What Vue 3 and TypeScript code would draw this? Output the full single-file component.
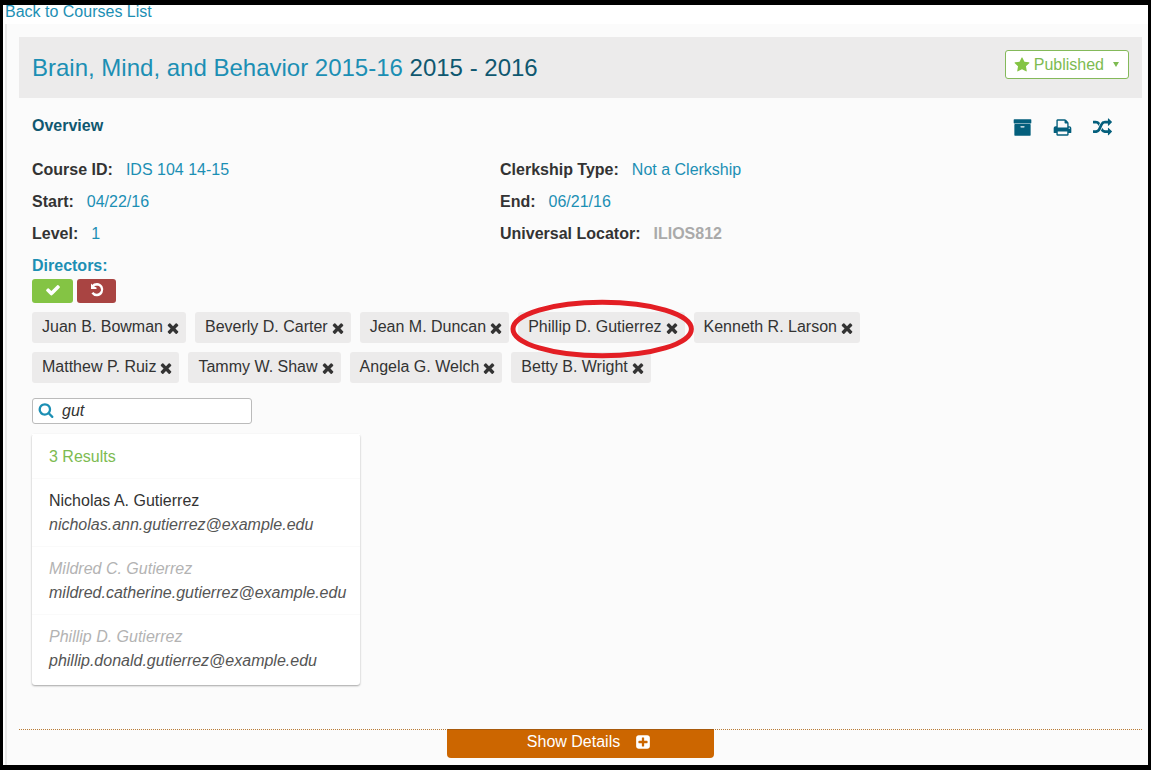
<script setup lang="ts">
import { ref } from 'vue'

interface Result {
  name: string
  email: string
  disabled: boolean
}

interface Director {
  name: string
  highlighted?: boolean
}

const icons = {
  archive: 'M1088 832q0-26-19-45t-45-19h-256q-26 0-45 19t-19 45 19 45 45 19h256q26 0 45-19t19-45zm576-192v960q0 26-19 45t-45 19h-1408q-26 0-45-19t-19-45v-960q0-26 19-45t45-19h1408q26 0 45 19t19 45zm64-448v256q0 26-19 45t-45 19h-1536q-26 0-45-19t-19-45v-256q0-26 19-45t45-19h1536q26 0 45 19t19 45z',
  print: 'M448 1536h896v-256h-896v256zm0-640h896v-384h-160q-40 0-68-28t-28-68v-160h-640v640zm1152 64q0-26-19-45t-45-19-45 19-19 45 19 45 45 19 45-19 19-45zm128 0v416q0 13-9.5 22.5t-22.5 9.5h-224v160q0 40-28 68t-68 28h-960q-40 0-68-28t-28-68v-160h-224q-13 0-22.5-9.5t-9.5-22.5v-416q0-79 56.5-135.5t135.5-56.5h64v-544q0-40 28-68t68-28h672q40 0 88 20t76 48l152 152q28 28 48 76t20 88v256h64q79 0 135.5 56.5t56.5 135.5z',
  random: 'M666 481q-60 92-137 273-22-45-37-72.5t-40.5-63.5-51-56.5-63-35-81.5-14.5h-224q-14 0-23-9t-9-23v-192q0-14 9-23t23-9h224q250 0 410 225zm1126 799q0 14-9 23l-320 320q-9 9-23 9-13 0-22.5-9.5t-9.5-22.5v-192q-32 0-85 .5t-81 1-73-1-71-5-64-10.5-63-18.5-58-28.5-59-40-55-53.5-56-69.5q59-93 136-273 22 45 37 72.5t40.5 63.5 51 56.5 63 35 81.5 14.5h256v-192q0-14 9-23t23-9q12 0 24 10l319 319q9 9 9 23zm0-896q0 14-9 23l-320 320q-9 9-23 9-13 0-22.5-9.5t-9.5-22.5v-192h-256q-48 0-87 15t-69 45-51 61.5-45 77.5q-32 62-78 171-29 66-49.5 111t-54 105-64 100-74 83-90 68.5-106.5 42-128 16.5h-224q-14 0-23-9t-9-23v-192q0-14 9-23t23-9h224q48 0 87-15t69-45 51-61.5 45-77.5q32-62 78-171 29-66 49.5-111t54-105 64-100 74-83 90-68.5 106.5-42 128-16.5h256v-192q0-14 9-23t23-9q12 0 24 10l319 319q9 9 9 23z',
  star: 'M1728 647q0 22-26 48l-363 354 86 500q1 7 1 20 0 21-10.5 35.5t-30.5 14.5q-19 0-40-12l-449-236-449 236q-22 12-40 12-21 0-31.5-14.5t-10.5-35.5q0-6 2-20l86-500-364-354q-25-27-25-48 0-37 56-46l502-73 225-455q19-41 49-41t49 41l225 455 502 73q56 9 56 46z',
  check: 'M1671 566q0 40-28 68l-724 724-136 136q-28 28-68 28t-68-28l-136-136-362-362q-28-28-28-68t28-68l136-136q28-28 68-28t68 28l294 295 656-657q28-28 68-28t68 28l136 136q28 28 28 68z',
  times: 'M1490 1322q0 40-28 68l-136 136q-28 28-68 28t-68-28l-294-294-294 294q-28 28-68 28t-68-28l-136-136q-28-28-28-68t28-68l294-294-294-294q-28-28-28-68t28-68l136-136q28-28 68-28t68 28l294 294 294-294q28-28 68-28t68 28l136 136q28 28 28 68t-28 68l-294 294 294 294q28 28 28 68z',
  search: 'M1216 832q0-185-131.5-316.5t-316.5-131.5-316.5 131.5-131.5 316.5 131.5 316.5 316.5 131.5 316.5-131.5 131.5-316.5zm512 832q0 52-38 90t-90 38q-54 0-90-38l-343-342q-179 124-399 124-143 0-273.5-55.5t-225-150-150-225-55.5-273.5 55.5-273.5 150-225 225-150 273.5-55.5 273.5 55.5 225 150 150 225 55.5 273.5q0 220-124 399l343 343q37 37 37 90z',
  plus: 'M1408 960v-128q0-26-19-45t-45-19h-320v-320q0-26-19-45t-45-19h-128q-26 0-45 19t-19 45v320h-320q-26 0-45 19t-19 45v128q0 26 19 45t45 19h320v320q0 26 19 45t45 19h128q26 0 45-19t19-45v-320h320q26 0 45-19t19-45zm256-544v960q0 119-84.5 203.5t-203.5 84.5h-960q-119 0-203.5-84.5t-84.5-203.5v-960q0-119 84.5-203.5t203.5-84.5h960q119 0 203.5 84.5t84.5 203.5z'
}

const query = ref<string>('gut')

const directors = ref<Director[]>([
  { name: 'Juan B. Bowman' },
  { name: 'Beverly D. Carter' },
  { name: 'Jean M. Duncan' },
  { name: 'Phillip D. Gutierrez', highlighted: true },
  { name: 'Kenneth R. Larson' },
  { name: 'Matthew P. Ruiz' },
  { name: 'Tammy W. Shaw' },
  { name: 'Angela G. Welch' },
  { name: 'Betty B. Wright' }
])

const results: Result[] = [
  { name: 'Nicholas A. Gutierrez', email: 'nicholas.ann.gutierrez@example.edu', disabled: false },
  { name: 'Mildred C. Gutierrez', email: 'mildred.catherine.gutierrez@example.edu', disabled: true },
  { name: 'Phillip D. Gutierrez', email: 'phillip.donald.gutierrez@example.edu', disabled: true }
]

function remove(name: string): void {
  directors.value = directors.value.filter((d) => d.name !== name)
}
</script>

<template>
  <div class="frame">
    <nav class="back"><a href="#">Back to Courses List</a></nav>
    <main class="course">
      <header class="course-header">
        <h1><a href="#">Brain, Mind, and Behavior 2015-16</a> 2015 - 2016</h1>
        <button type="button" class="published">
          <svg class="icon" viewBox="0 0 1792 1792"><path :d="icons.star" /></svg>
          <span>Published</span>
          <span class="caret"></span>
        </button>
      </header>

      <section class="overview">
        <div class="overview-title">
          <h2>Overview</h2>
          <div class="tools">
            <button type="button" aria-label="Materials"><svg viewBox="0 0 1792 1792"><path :d="icons.archive" /></svg></button>
            <button type="button" aria-label="Print"><svg viewBox="0 0 1792 1792"><path :d="icons.print" /></svg></button>
            <button type="button" aria-label="Rollover"><svg viewBox="0 0 1792 1792"><path :d="icons.random" /></svg></button>
          </div>
        </div>

        <dl class="facts">
          <div><dt>Course ID:</dt><dd><a href="#">IDS 104 14-15</a></dd></div>
          <div><dt>Clerkship Type:</dt><dd><a href="#">Not a Clerkship</a></dd></div>
          <div><dt>Start:</dt><dd><a href="#">04/22/16</a></dd></div>
          <div><dt>End:</dt><dd><a href="#">06/21/16</a></dd></div>
          <div><dt>Level:</dt><dd><a href="#">1</a></dd></div>
          <div><dt>Universal Locator:</dt><dd class="locator">ILIOS812</dd></div>
        </dl>

        <h3>Directors:</h3>
        <div class="actions">
          <button type="button" class="save" aria-label="Save"><svg class="icon" viewBox="0 0 1792 1792"><path :d="icons.check" /></svg></button>
          <button type="button" class="cancel" aria-label="Cancel">
            <svg class="icon undo" viewBox="0 0 16 16">
              <path class="head" d="M2 1.5L3.7 3.2L4.6 2.4L5.2 4.6L7.5 5.4V7H2z" />
              <path class="arc" d="M3.5 4.2C4.6 2.9 6.2 2.2 8 2.2a5.4 5.4 0 1 1-4.6 8.6" />
            </svg>
          </button>
        </div>

        <ul class="chips">
          <li v-for="d in directors" :key="d.name">
            <button type="button" @click="remove(d.name)">
              {{ d.name }}<svg class="icon" viewBox="0 0 1792 1792"><path :d="icons.times" /></svg>
            </button>
            <svg v-if="d.highlighted" class="ring" viewBox="0 0 186 60"><ellipse cx="93" cy="30" rx="90" ry="27" /></svg>
          </li>
        </ul>

        <label class="search">
          <svg class="icon" viewBox="0 0 1792 1792"><path :d="icons.search" /></svg>
          <input v-model="query" type="text" aria-label="Search directors" />
        </label>

        <ul class="results">
          <li class="count">{{ results.length }} Results</li>
          <li v-for="r in results" :key="r.email" :class="{ disabled: r.disabled }">
            <div class="name">{{ r.name }}</div>
            <div class="email">{{ r.email }}</div>
          </li>
        </ul>
      </section>

      <footer class="details">
        <button type="button">
          Show Details
          <svg class="icon" viewBox="0 0 1792 1792"><path :d="icons.plus" /></svg>
        </button>
      </footer>
    </main>
  </div>
</template>

<style>
body {
  margin: 0;
  background: #fff;
}
</style>

<style scoped>
* {
  box-sizing: border-box;
}

.frame {
  display: flex;
  flex-direction: column;
  min-height: calc(100vh - 1px);
  border: solid #000;
  border-width: 5px 3px;
  font: 16px/24px "Liberation Sans", Arial, sans-serif;
  color: #333;
}

h1, h2, h3, ul, dl, dd {
  margin: 0;
  padding: 0;
}

ul {
  list-style: none;
}

a {
  color: #1c8fb4;
  text-decoration: none;
}

button {
  margin: 0;
  border: 0;
  font: inherit;
  color: inherit;
  cursor: pointer;
}

svg {
  display: block;
  fill: currentColor;
}

.icon {
  flex: none;
  width: 16px;
  height: 16px;
}

.back {
  height: 19px;
  padding-left: 2px;
  line-height: 14px;
}

.course {
  flex: 1;
  margin-left: 2px;
  padding: 13px 6px 0 12px;
  border-left: 2px solid #eaeaea;
  background: #fbfbfb;
}

.course-header {
  display: flex;
  align-items: flex-start;
  justify-content: space-between;
  padding: 13px 13px 18px;
  background: #ecebeb;
}

h1 {
  font-size: 24px;
  line-height: 30px;
  padding-top: 3px;
  margin-bottom: -3px;
  font-weight: normal;
  color: #0f5870;
}

.published {
  display: flex;
  align-items: center;
  gap: 4px;
  height: 29px;
  padding: 0 9px 0 8px;
  border: 1px solid #84b95a;
  border-radius: 3px;
  background: #fff;
  color: #7dbb51;
}

.published .icon {
  color: #84c444;
}

.caret {
  margin-left: 5px;
  border: solid transparent;
  border-width: 5px 3px 0;
  border-top-color: currentColor;
}

.overview {
  padding: 16px 13px 0;
}

.overview-title {
  display: flex;
  justify-content: space-between;
  padding-right: 17px;
  margin-bottom: 16px;
}

h2, h3 {
  font-size: 16px;
  line-height: 24px;
}

h2 {
  color: #0f5870;
}

h3 {
  color: #1c8fb4;
}

.tools {
  display: flex;
  align-items: center;
  gap: 21px;
  padding-top: 2px;
  color: #045f7c;
}

.tools button {
  padding: 0;
  background: none;
}

.tools svg {
  width: 19px;
  height: 19px;
}

.facts {
  display: grid;
  grid-template-columns: minmax(0, 468px) 1fr;
  row-gap: 8px;
  margin-bottom: 8px;
  padding-top: 4px;
}

.facts div {
  display: flex;
  gap: 13px;
}

dt {
  font-weight: bold;
}

.locator {
  font-weight: bold;
  color: #aaa;
}

.actions {
  display: flex;
  gap: 4px;
  margin: 1px 0 9px;
}

.actions button {
  display: flex;
  align-items: center;
  justify-content: center;
  height: 24px;
  padding: 0 0 2px;
  border-radius: 3px;
  color: #fff;
}

.actions .save {
  width: 41px;
  background: #84c444;
}

.actions .cancel {
  width: 39px;
  background: #a94442;
}

.undo .arc {
  fill: none;
  stroke: currentColor;
  stroke-width: 2.4;
}

.chips {
  display: flex;
  flex-wrap: wrap;
  gap: 9px;
  max-width: 860px;
}

.chips li {
  position: relative;
}

.chips button {
  display: flex;
  align-items: center;
  gap: 2px;
  height: 31px;
  padding: 0 5px 2px 10px;
  border-radius: 3px;
  background: #ecebeb;
  white-space: nowrap;
}

.chips .icon {
  margin-top: 2px;
}

.ring {
  position: absolute;
  z-index: 1;
  top: -13px;
  left: -8px;
  width: calc(100% + 18px);
  height: 60px;
  overflow: visible;
  pointer-events: none;
  fill: none;
  stroke: #e31e24;
  stroke-width: 5;
}

.search {
  display: flex;
  align-items: center;
  width: 220px;
  height: 26px;
  margin: 15px 0 10px;
  padding: 0 5px;
  border: 1px solid #bbb;
  border-radius: 3px;
  background: #fff;
  color: #1c8fb4;
}

.search .icon {
  margin-bottom: 2px;
}

.search input {
  flex: 1;
  min-width: 0;
  margin: 0;
  padding: 0 0 0 8px;
  border: 0;
  outline: 0;
  background: none;
  font: italic 16px/24px "Liberation Sans", Arial, sans-serif;
  color: #333;
}

.results {
  width: fit-content;
  min-width: 328px;
  padding-bottom: 3px;
  border-radius: 3px;
  background: #fff;
  box-shadow: 0 1px 2px rgba(0, 0, 0, 0.35);
}

.results li {
  padding: 10px 12px 9px 17px;
  border-top: 1px solid #fafafa;
}

.results .count {
  border-top-color: #fff;
  color: #7dbb51;
}

.email {
  font-style: italic;
  color: #555;
}

.disabled .name {
  font-style: italic;
  color: #b3b3b3;
}

/* One-pixel dots, repeated across the full width of the footer */
.details {
  display: flex;
  justify-content: center;
  margin-top: 44px;
  background: repeating-linear-gradient(to right, #b87a35 0 1px, transparent 1px 2px) top / 100% 1px no-repeat;
}

.details button {
  display: flex;
  align-items: center;
  gap: 15px;
  height: 29px;
  padding: 0 63px 4px 80px;
  border-top: 1px solid #a85a0c;
  border-radius: 0 0 4px 4px;
  background: #cc6600;
  color: #fff;
}
</style>
